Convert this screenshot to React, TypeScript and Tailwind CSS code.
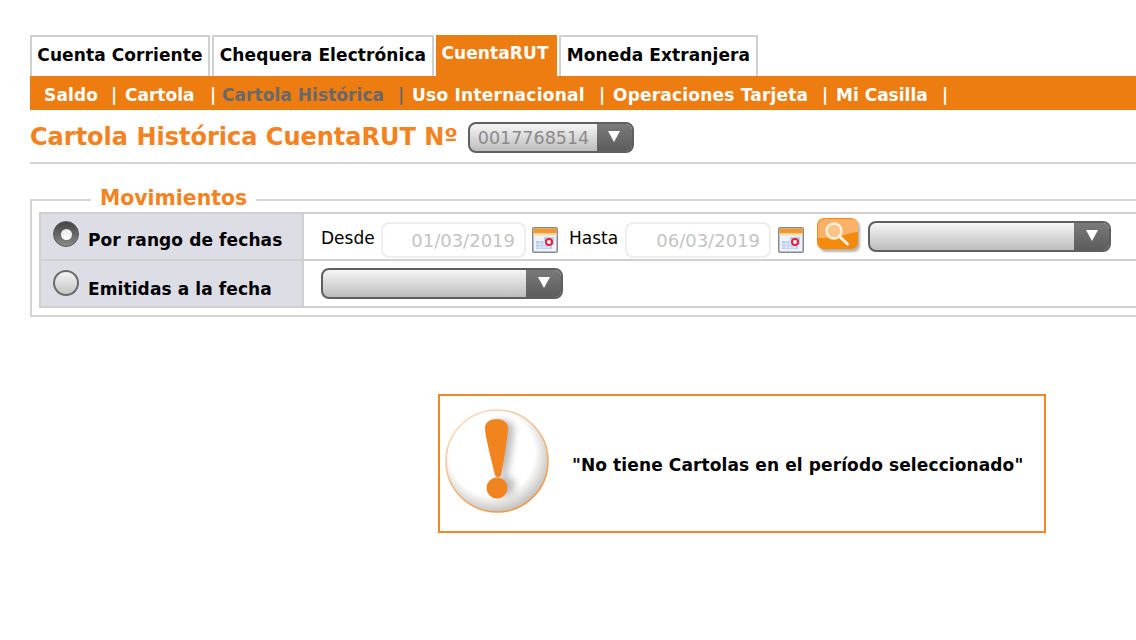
import React from "react";

const tabs = [
  { label: "Cuenta Corriente", w: "w-[180px]" },
  { label: "Chequera Electrónica", w: "w-[222px]" },
  { label: "CuentaRUT", w: "w-[121px]", active: true },
  { label: "Moneda Extranjera", w: "w-[199px]" },
];

const subs = [
  { label: "Saldo", w: "w-[67px]", bar: "w-[14px]", t: "tracking-[0.15px]" },
  { label: "Cartola", w: "w-[85px]", bar: "w-[12px]", t: "" },
  { label: "Cartola Histórica", w: "w-[176px]", bar: "w-[14px]", cur: true, t: "tracking-[0.06px]" },
  { label: "Uso Internacional", w: "w-[187px]", bar: "w-[14px]", t: "tracking-[0.25px]" },
  { label: "Operaciones Tarjeta", w: "w-[209px]", bar: "w-[14px]", t: "tracking-[0.2px]" },
  { label: "Mi Casilla", w: "w-[106px]", bar: "w-[14px]", t: "" },
];

function Select({ w, value }: { w: string; value?: string }) {
  return (
    <div className={`flex h-[31px] ${w} overflow-hidden rounded-[8px] border-2 border-[#5f5f5f] bg-gradient-to-b from-[#f6f6f6] to-[#bdbdbd]`}>
      <div className="flex-1 pl-[8px] text-[17.5px] leading-[29px] text-[#8a8a8a]">{value}</div>
      <div className="flex w-[35px] items-center justify-center bg-gradient-to-b from-[#7a7a7a] to-[#5c5c5c] pb-[2px]">
        <svg width="14" height="13" viewBox="0 0 14 13"><path d="M1 1h12L7 12z" fill="#fff" /></svg>
      </div>
    </div>
  );
}

function Cal() {
  return (
    <svg width="26" height="26" viewBox="0 0 26 26" className="block shrink-0">
      <rect x="0" y="0" width="26" height="26" rx="2" fill="#8a8a8a" />
      <rect x="1.5" y="1.5" width="23" height="23" fill="#eef3fa" />
      <rect x="1.5" y="1.5" width="23" height="5" fill="#f39a2d" />
      <rect x="1.5" y="6.5" width="23" height="2" fill="#f9d9a8" />
      <rect x="4" y="14" width="16" height="8" fill="#b6cdf0" />
      <rect x="12" y="10" width="10" height="8" fill="#b6cdf0" />
      <path d="M4 17h14M4 20h14M8 14v8M12 14v8M16 14v8" stroke="#eef3fa" strokeWidth="0.8" />
      <circle cx="17" cy="15" r="3" fill="#fff" stroke="#e8223a" strokeWidth="2" />
    </svg>
  );
}

function DateInput({ value, w }: { value: string; w: string }) {
  return (
    <div className={`h-[36px] ${w} rounded-[8px] border-2 border-[#eeeeee] pr-[9px] text-right text-[18px] leading-[33px] text-[#c4c4c4]`}>
      {value}
    </div>
  );
}

function Radio({ on }: { on?: boolean }) {
  return on ? (
    <span className="flex h-[26px] w-[26px] shrink-0 items-center justify-center rounded-full border border-[#555] bg-gradient-to-b from-[#444] to-[#8a8a8a]">
      <span className="h-[11px] w-[11px] rounded-full bg-gradient-to-b from-[#e8e8e8] to-[#fff]" />
    </span>
  ) : (
    <span className="block h-[26px] w-[26px] shrink-0 rounded-full border-2 border-[#6a6a6a] bg-gradient-to-b from-[#f4f4f4] to-[#c4c4c4]" />
  );
}

function SearchBtn() {
  return (
    <svg width="46" height="36" viewBox="0 0 46 36" className="block shrink-0">
      <defs>
        <filter id="sb" x="-20%" y="-20%" width="140%" height="140%"><feGaussianBlur stdDeviation="1.2" /></filter>
      </defs>
      <rect x="3" y="3" width="41" height="32" rx="7" fill="#8a7f6f" opacity="0.6" filter="url(#sb)" />
      <rect x="1" y="1" width="41" height="31" rx="7" fill="#f58a0a" />
      <path d="M2 8a6 6 0 0 1 6-6h28a6 6 0 0 1 6 6v7c-12 1-14 6-40 6z" fill="#fbb268" />
      <circle cx="18" cy="14" r="7.5" fill="#fcc48c" stroke="#fff0dc" strokeWidth="2.4" />
      <path d="M23.5 19.5l8 7.5" stroke="#fff4e6" strokeWidth="3" strokeLinecap="round" />
    </svg>
  );
}

function Alert() {
  return (
    <svg width="104" height="106" viewBox="0 0 104 106" className="block shrink-0">
      <defs>
        <radialGradient id="al" cx="45%" cy="42%" r="58%">
          <stop offset="0.72" stopColor="#ffffff" />
          <stop offset="1" stopColor="#c6c4c0" />
        </radialGradient>
        <linearGradient id="ring" x1="0.2" y1="0" x2="0.8" y2="1">
          <stop offset="0" stopColor="#fadcc0" />
          <stop offset="1" stopColor="#ee8f38" />
        </linearGradient>
        <filter id="ab" x="-40%" y="-40%" width="180%" height="180%"><feGaussianBlur stdDeviation="3.5" /></filter>
      </defs>
      <circle cx="52" cy="53" r="51" fill="url(#al)" stroke="url(#ring)" strokeWidth="1.5" />
      <path d="M46 20c0-10 23-10 23 0 0 8-5 38-7 47-1 3-5 3-6 0-2-9-10-39-10-47zM60 88a10 10 0 1 0-.1 0z" fill="#8f8f8f" opacity="0.6" filter="url(#ab)" />
      <path d="M40 20c0-12 23-12 23 0 0 8-5 38-7 47-1 3-5 3-6 0-2-9-10-39-10-47z" fill="#f2841f" />
      <circle cx="52" cy="80" r="10.5" fill="#f2841f" />
    </svg>
  );
}

export default function App() {
  return (
    <div className="h-[640px] w-[1136px] overflow-hidden bg-white pt-[35px] pl-[30px] font-['DejaVu_Sans',sans-serif]">
      <div className="flex gap-[2px]">
        {tabs.map((t) =>
          t.active ? (
            <div key={t.label} className={`h-[41px] ${t.w} bg-[#ee7d11] pt-[8px] pr-[3px] text-center text-[17px] leading-[21px] tracking-[0.1px] font-bold text-white`}>
              {t.label}
            </div>
          ) : (
            <div key={t.label} className={`h-[41px] ${t.w} border-2 border-b-0 border-[#d0d0d0] pt-[8px] text-center text-[17px] leading-[21px] tracking-[0.1px] font-bold text-black`}>
              {t.label}
            </div>
          ),
        )}
      </div>
      <div className="flex h-[34px] items-center bg-[#ee7d11] pt-[4px] pl-[14px] text-[17px] leading-[21px] font-bold text-white">
        {subs.map((s) => (
          <div key={s.label} className={`flex shrink-0 whitespace-nowrap ${s.cur ? "text-[#67686c]" : ""}`}>
            <span className={`${s.w} ${s.t}`}>{s.label}</span>
            <span className={s.bar}>|</span>
          </div>
        ))}
      </div>
      <div className="flex h-[54px] items-center gap-[10px] border-b-2 border-[#d4d4d4] pt-[2px]">
        <h1 className="text-[24px] leading-[28px] font-bold text-[#f58220]">Cartola Histórica CuentaRUT Nº</h1>
        <span className="mt-[1px]"><Select w="w-[166px]" value="0017768514" /></span>
      </div>
      <fieldset className="mt-[24px] h-[129px] border-y-2 border-l-2 border-[#d4d4d4] pl-[7px]">
        <legend className="ml-[52px] px-[9px] pb-[3px] text-[20.4px] leading-[21px] font-bold text-[#f58220]">Movimientos</legend>
        <div className="border-y-2 border-l-2 border-[#d0d0d0]">
          <div className="flex h-[47px] border-b-2 border-[#d0d0d0]">
            <div className="flex w-[263px] shrink-0 border-r-2 border-[#d0d0d0] bg-[#dcdde5] pl-[12px]">
              <span className="pt-[7px]"><Radio on /></span>
              <span className="pt-[15px] pl-[9px] text-[17px] leading-[22px] tracking-[0.1px] font-bold text-black">Por rango de fechas</span>
            </div>
            <div className="flex items-start pt-[8px] pl-[17px] text-[17px] text-black">
              <span className="w-[60px] pt-[6px] leading-[20px]">Desde</span>
              <DateInput value="01/03/2019" w="w-[145px]" />
              <span className="ml-[6px] pt-[5px]"><Cal /></span>
              <span className="ml-[11px] w-[56px] pt-[6px] leading-[20px]">Hasta</span>
              <DateInput value="06/03/2019" w="w-[146px]" />
              <span className="ml-[7px] pt-[5px]"><Cal /></span>
              <span className="mt-[-5px] ml-[12px]"><SearchBtn /></span>
              <span className="mt-[-1px] ml-[6px]"><Select w="w-[243px]" /></span>
            </div>
          </div>
          <div className="flex h-[45px]">
            <div className="flex w-[263px] shrink-0 border-r-2 border-[#d0d0d0] bg-[#dcdde5] pl-[12px]">
              <span className="pt-[9px]"><Radio /></span>
              <span className="pt-[17px] pl-[9px] text-[17px] leading-[22px] tracking-[0.1px] font-bold text-black">Emitidas a la fecha</span>
            </div>
            <div className="pt-[7px] pl-[17px]">
              <Select w="w-[242px]" />
            </div>
          </div>
        </div>
      </fieldset>
      <div className="mt-[77px] ml-[408px] flex h-[139px] w-[608px] items-start border-2 border-[#f0882a] pt-[12px] pr-[4px] pl-[5px]">
        <Alert />
        <span className="mt-[46px] ml-[23px] text-[17px] leading-[22px] tracking-[0.11px] font-bold whitespace-nowrap text-black">"No tiene Cartolas en el período seleccionado"</span>
      </div>
    </div>
  );
}
